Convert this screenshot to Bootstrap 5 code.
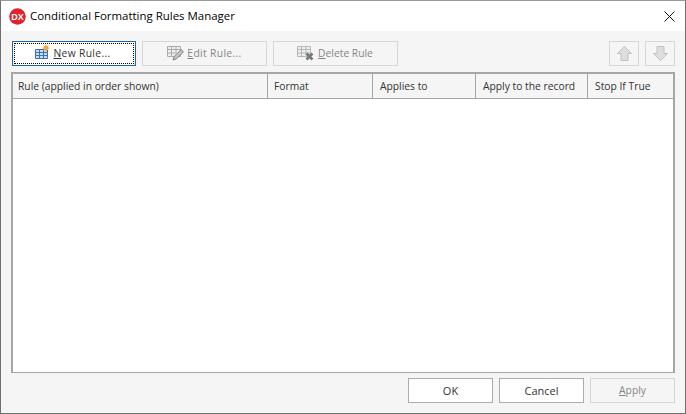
<!DOCTYPE html>
<html lang="en">
<head>
    <meta charset="UTF-8">
    <title>Conditional Formatting Rules Manager</title>
    <link href="https://cdn.jsdelivr.net/npm/bootstrap@5.3.0/dist/css/bootstrap.min.css" rel="stylesheet">
    <style>
        html, body { height: 100%; }
        body {
            background: #f5f5f5;
            font-family: "Open Sans", Roboto, sans-serif;
            font-size: 10.3px;
            color: #333;
            overflow: hidden;
        }
        .dlg-window {
            height: 414px;
            border: 1px solid #6f6f6f;
            border-top-color: #9a9a9a;
            background: #f5f5f5;
        }
        .dlg-title {
            height: 30px;
            background: #fff;
            padding: 0 10px 0 8px;
            color: #000;
        }
        .dlg-logo { width: 17px; height: 17px; margin-right: 4px; }
        .dlg-caption { font-size: 11.45px; }
        .dlg-toolbar { height: 25px; margin: 10px 10px 0 11px; }
        .dlg-btn {
            height: 25px;
            border: 1px solid #ababab;
            background: #fff;
            color: #333;
            padding: 0;
            font-size: 10.3px;
            line-height: 1;
            border-radius: 0;
            white-space: nowrap;
        }
        .dlg-btn:disabled {
            background: #f5f5f5;
            border: 1px solid #d6d6d6;
            color: #858585;
            opacity: 1;
        }
        .dlg-tool { width: 125px; }
        .dlg-new { border: 1px solid #1c66a8; width: 124px; position: relative; padding-right: 3px; }
        .dlg-new::after {
            content: "";
            position: absolute;
            inset: 1px;
            border: 1px dotted #000;
        }
        .dlg-del { padding-right: 1px; }
        .dlg-spaced { letter-spacing: .35px; }
        .dlg-arrow { width: 30px; }
        .dlg-ico-new { margin-right: 3px; margin-top: -3px; }
        .dlg-ico-edit { margin-right: 3px; margin-top: -1px; }
        .dlg-ico-del { margin-right: 3px; }
        .dlg-grid {
            height: 301px;
            margin: 6px 10px 0 10px;
            border: 1px solid #a6a6a6;
            border-width: 2px 2px 1px;
            background: #fff;
        }
        .dlg-head {
            height: 25px;
            background: #f5f5f5;
            border-bottom: 1px solid #a6a6a6;
            white-space: nowrap;
        }
        .dlg-col {
            padding-left: 7px;
            padding-top: 1px;
            border-right: 1px solid #a6a6a6;
            color: #333;
        }
        .dlg-col:first-child { padding-left: 5px; }
        .dlg-col:last-child { border-right: 0; }
        .w-rule { width: 255px; }
        .w-format { width: 105px; padding-left: 6px; }
        .w-applies { width: 103px; }
        .w-record { width: 112px; }
        .w-stop { flex: 1; }
        .dlg-footer { margin: 5px 10px 0 0; }
        .dlg-foot-btn { width: 85px; }
        .dlg-foot-big { font-size: 11px; }
        .dlg-gap-tool { gap: 6px; }
    </style>
</head>
<body>
<div class="dlg-window d-flex flex-column">
    <!-- Title bar -->
    <div class="dlg-title d-flex align-items-center">
        <svg class="dlg-logo" viewBox="0 0 17 17">
            <circle cx="8.5" cy="8.5" r="8.3" fill="#e2232b"/>
            <text x="8.5" y="12" text-anchor="middle" font-family="Liberation Sans, sans-serif" font-size="9" font-weight="700" fill="#fff">DX</text>
        </svg>
        <span class="dlg-caption">Conditional Formatting Rules Manager</span>
        <svg class="ms-auto" width="11" height="11" viewBox="0 0 11 11">
            <path d="M.5.5l10 10M10.5.5l-10 10" stroke="#111" stroke-width="1" fill="none"/>
        </svg>
    </div>

    <!-- Toolbar -->
    <div class="dlg-toolbar d-flex dlg-gap-tool">
        <button type="button" class="btn dlg-btn dlg-new d-flex align-items-center justify-content-center">
            <svg width="16" height="16" viewBox="0 0 16 16" class="dlg-ico-new">
                <path d="M1.5 5.5h12v9h-12z" fill="#c9dcf3" stroke="#3c6fb0"/>
                <path d="M1.5 8.5h12M1.5 11.5h12M5.5 5.5v9M9.5 5.5v9" stroke="#3c6fb0"/>
                <circle cx="12" cy="4" r="2.4" fill="#f2a93b"/>
                <path d="M12 .5v7M8.5 4h7M9.6 1.6l4.8 4.8M14.4 1.6L9.6 6.4" stroke="#f2a93b"/>
            </svg>
            <span class="dlg-spaced"><u>N</u>ew Rule...</span>
        </button>
        <button type="button" class="btn dlg-btn dlg-tool d-flex align-items-center justify-content-center" disabled>
            <svg width="17" height="16" viewBox="0 0 17 16" class="dlg-ico-edit">
                <path d="M.5 1.5h13v10H.5z" fill="#efefef" stroke="#ababab"/>
                <path d="M.5 4.5h13M.5 8h8M4.5 1.5v10M9 1.5v7" stroke="#ababab"/>
                <path d="M6 15l1.2-3.5 7-7 2.3 2.3-7 7z" fill="#c4c4c4" stroke="#808080"/>
            </svg>
            <span class="dlg-spaced"><u>E</u>dit Rule...</span>
        </button>
        <button type="button" class="btn dlg-btn dlg-tool dlg-del d-flex align-items-center justify-content-center" disabled>
            <svg width="18" height="17" viewBox="0 0 18 17" class="dlg-ico-del">
                <path d="M.5 1.5h13v10H.5z" fill="#efefef" stroke="#b5b5b5"/>
                <path d="M.5 4.5h13M.5 8h13M4.5 1.5v10M9 1.5v10" stroke="#b5b5b5"/>
                <path d="M9.5 8.5l6 6M15.5 8.5l-6 6" stroke="#777" stroke-width="2.6"/>
            </svg>
            <span><u>D</u>elete Rule</span>
        </button>
        <button type="button" class="btn dlg-btn dlg-arrow ms-auto d-flex align-items-center justify-content-center" disabled>
            <svg width="15" height="15" viewBox="0 0 15 15">
                <path d="M7.5 .5l7 7H11v7H4v-7H.5z" fill="#dedede" stroke="#c0c0c0"/>
            </svg>
        </button>
        <button type="button" class="btn dlg-btn dlg-arrow d-flex align-items-center justify-content-center" disabled>
            <svg width="15" height="15" viewBox="0 0 15 15">
                <path d="M7.5 14.5l7-7H11V.5H4v7H.5z" fill="#dedede" stroke="#c0c0c0"/>
            </svg>
        </button>
    </div>

    <!-- Rules grid -->
    <div class="dlg-grid">
        <div class="dlg-head d-flex">
            <div class="dlg-col w-rule d-flex align-items-center">Rule (applied in order shown)</div>
            <div class="dlg-col w-format d-flex align-items-center">Format</div>
            <div class="dlg-col w-applies d-flex align-items-center">Applies to</div>
            <div class="dlg-col w-record d-flex align-items-center">Apply to the record</div>
            <div class="dlg-col w-stop d-flex align-items-center">Stop If True</div>
        </div>
    </div>

    <!-- Footer buttons -->
    <div class="dlg-footer d-flex justify-content-end dlg-gap-tool">
        <button type="button" class="btn dlg-btn dlg-foot-btn dlg-foot-big">OK</button>
        <button type="button" class="btn dlg-btn dlg-foot-btn dlg-foot-big">Cancel</button>
        <button type="button" class="btn dlg-btn dlg-foot-btn" disabled><u>A</u>pply</button>
    </div>
</div>
<script src="https://cdn.jsdelivr.net/npm/bootstrap@5.3.0/dist/js/bootstrap.bundle.min.js"></script>
</body>
</html>
